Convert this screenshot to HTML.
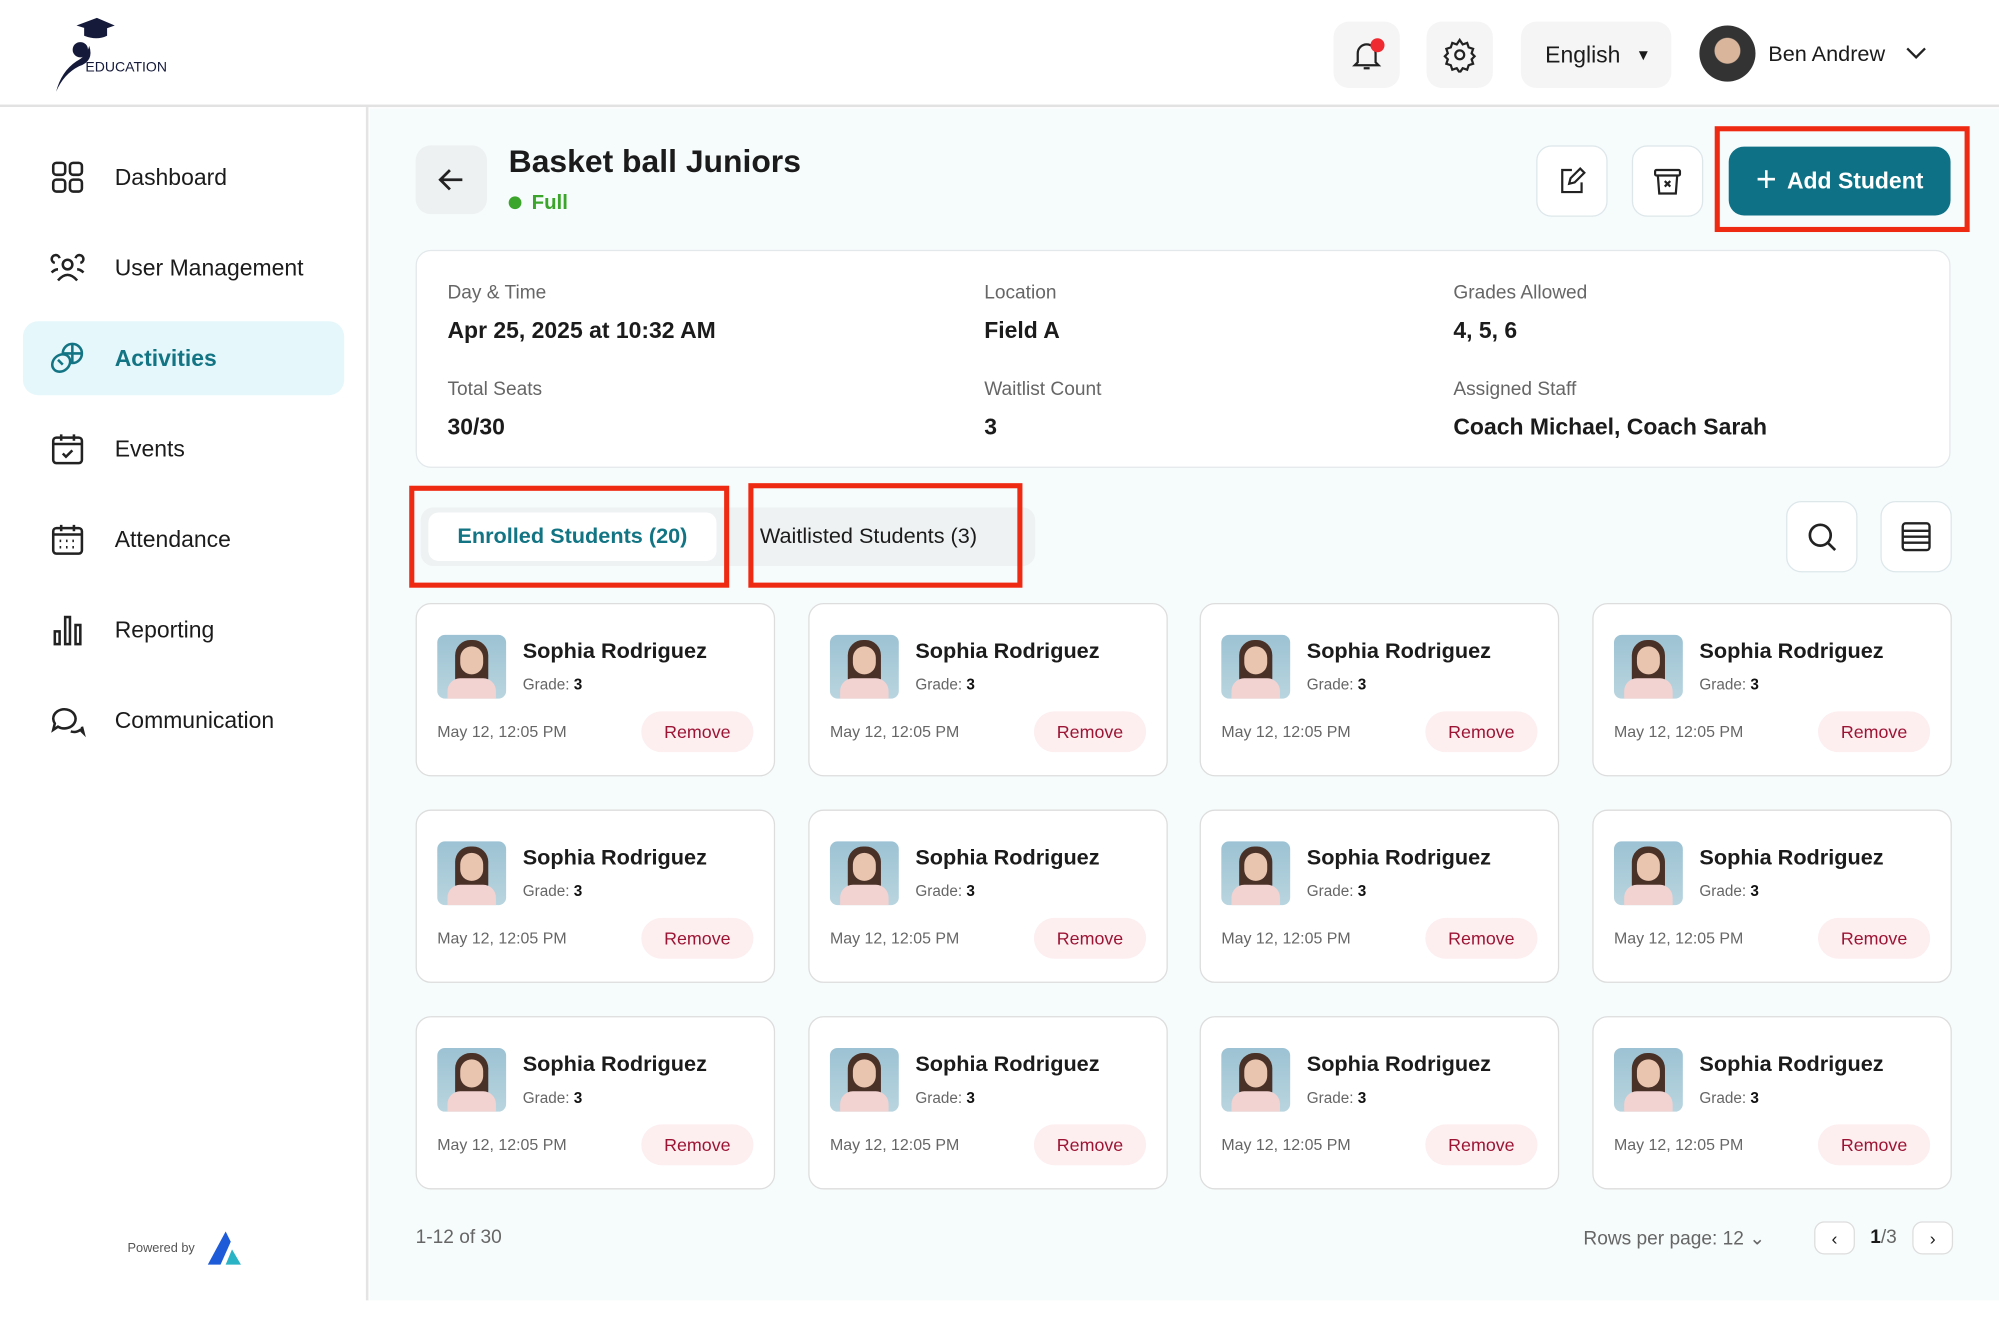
<!DOCTYPE html>
<html><head><meta charset="utf-8"><style>
*{box-sizing:border-box;margin:0;padding:0}
html,body{width:1999px;height:1326px;overflow:hidden;background:#fff;font-family:"Liberation Sans",sans-serif;color:#1b1b1b}
#w{width:1568px;height:1040px;transform:scale(1.27487);transform-origin:0 0;position:relative}
.a{position:absolute}
.hdr{left:0;top:0;width:1568px;height:84px;border-bottom:2px solid #e2e2e2;background:#fff}
.side{left:0;top:84px;width:289px;height:936px;border-right:2px solid #e4e4e4;background:#fff}
.main{left:290px;top:85px;width:1278px;height:935px;background:#f6fbfc}
.nav{left:18px;width:252px;height:58px;border-radius:12px;display:flex;align-items:center;padding-left:20px;font-size:18px;color:#1b1b1b}
.nav svg{width:30px;height:30px;margin-right:22px;fill:none;stroke:#222;stroke-width:1.6}
.nav.act{background:#e6f7fb;color:#137584;font-weight:bold}
.nav.act svg{stroke:#137584}
.ib{width:52px;height:52px;border-radius:12px;background:#f5f5f5;display:flex;align-items:center;justify-content:center}
.ib2{width:56px;height:56px;border-radius:12px;background:#fff;border:1px solid #dde7ea;display:flex;align-items:center;justify-content:center}
.lbl{font-size:15px;color:#666}
.val{font-size:18px;font-weight:bold;color:#1b1b1b}
.card{width:282px;height:136px;background:#fff;border:1.5px solid #ddd;border-radius:12px}
.ph{position:absolute;left:16px;top:24px;width:54px;height:50px;border-radius:6px;background:linear-gradient(#9cc2d3,#b9d5df);overflow:hidden}
.nm{position:absolute;left:83px;top:27px;font-size:17px;font-weight:bold}
.gr{position:absolute;left:83px;top:56px;font-size:12px;color:#666}
.gr b{color:#111}
.dt{position:absolute;left:16px;top:93px;font-size:12.5px;color:#666}
.rm{position:absolute;right:16px;top:84px;width:88px;height:32px;border-radius:16px;background:#fdeef0;color:#9c1434;font-size:14px;text-align:center;line-height:32px}
.red{border:4px solid #ef2a12}
</style></head><body><div id="w">
<div class="a hdr">
 <svg class="a" style="left:40px;top:12px" width="55" height="62" viewBox="0 0 55 62"><path d="M20 8 L36 2 L50 8 L36 13 Z" fill="#151a3a"/><path d="M26 10 v6 q10 4 18 0 v-6" fill="#151a3a"/><circle cx="23" cy="27" r="6" fill="#151a3a"/><path d="M30 24 Q34 36 22 40 Q10 46 4 60 Q8 44 20 36 Q28 32 30 24Z" fill="#151a3a"/></svg>
 <div class="a" style="left:67px;top:47px;font-size:11px;color:#151a3a">EDUCATION</div>
 <div class="a ib" style="left:1046px;top:17px"><svg width="28" height="28" viewBox="0 0 24 24" fill="none" stroke="#222" stroke-width="1.5"><path d="M6 17V11a6 6 0 0 1 12 0v6l2 2H4z"/><path d="M10 21h4"/></svg><div class="a" style="left:29px;top:13px;width:11px;height:11px;border-radius:50%;background:#ef2a30"></div></div>
 <div class="a ib" style="left:1119px;top:17px"><svg width="28" height="28" viewBox="0 0 24 24" fill="none" stroke="#222" stroke-width="1.5"><circle cx="12" cy="12" r="3"/><path d="M12 2l2 3 3-1 1 3 3 1-1 3 2 2-2 2 1 3-3 1-1 3-3-1-2 3-2-3-3 1-1-3-3-1 1-3-2-2 2-2-1-3 3-1 1-3 3 1z"/></svg></div>
 <div class="a ib" style="left:1193px;top:17px;width:118px;justify-content:flex-start;padding-left:19px;font-size:18px">English <span style="margin-left:12px;font-size:12px">▼</span></div>
 <div class="a" style="left:1333px;top:20px;width:44px;height:44px;border-radius:50%;background:radial-gradient(circle at 50% 45%,#d9b59c 0 30%,#333 32%)"></div>
 <div class="a" style="left:1387px;top:33px;font-size:17px">Ben Andrew</div>
 <svg class="a" style="left:1494px;top:35px" width="18" height="12" viewBox="0 0 18 12"><path d="M2 3l7 7 7-7" stroke="#222" stroke-width="1.8" fill="none"/></svg>
</div>
<div class="a side">
 <div class="a nav" style="top:26px"><svg viewBox="0 0 24 24"><rect x="3" y="3" width="7.5" height="7.5" rx="2"/><rect x="13.5" y="3" width="7.5" height="7.5" rx="2"/><rect x="3" y="13.5" width="7.5" height="7.5" rx="2"/><rect x="13.5" y="13.5" width="7.5" height="7.5" rx="2"/></svg>Dashboard</div>
 <div class="a nav" style="top:97px"><svg viewBox="0 0 24 24"><circle cx="12" cy="10" r="3"/><path d="M6 20q6-7 12 0M4 9a2.5 2.5 0 1 1 3-3M20 9a2.5 2.5 0 1 0-3-3M2 15q2-2 4-2M22 15q-2-2-4-2"/></svg>User Management</div>
 <div class="a nav act" style="top:168px"><svg viewBox="0 0 24 24"><circle cx="15" cy="9" r="6"/><path d="M15 3v12M9 9h12"/><ellipse cx="8" cy="15" rx="6" ry="5" transform="rotate(-40 8 15)" fill="#e6f7fb"/><path d="M6 13l3 3"/></svg>Activities</div>
 <div class="a nav" style="top:239px"><svg viewBox="0 0 24 24"><rect x="3" y="5" width="18" height="16" rx="2"/><path d="M3 9h18M8 3v4M16 3v4M9 15l2 2 4-4"/></svg>Events</div>
 <div class="a nav" style="top:310px"><svg viewBox="0 0 24 24"><rect x="3" y="5" width="18" height="16" rx="2"/><path d="M3 9h18M8 3v4M16 3v4M7 13h1M11 13h1M15 13h1M7 17h1M11 17h1M15 17h1"/></svg>Attendance</div>
 <div class="a nav" style="top:381px"><svg viewBox="0 0 24 24"><rect x="4" y="13" width="3" height="8"/><rect x="10.5" y="4" width="3" height="17"/><rect x="17" y="9" width="3" height="12"/></svg>Reporting</div>
 <div class="a nav" style="top:452px"><svg viewBox="0 0 24 24"><path d="M3 11a7 6 0 1 1 3 5l-3 2 1-4a6 6 0 0 1-1-3z"/><path d="M14 19a6 5 0 0 0 6-1l2 2-1-4"/></svg>Communication</div>
 <div class="a" style="left:100px;top:890px;font-size:10px;color:#555">Powered by</div>
 <svg class="a" style="left:161px;top:880px" width="30" height="30" viewBox="0 0 30 30"><path d="M2 28L16 2l4 8-8 18z" fill="#1d5bd8"/><path d="M16 28l5-12 7 12z" fill="#2ab3c4"/></svg>
</div>
<div class="a main"></div>
<div class="a ib2" style="left:326px;top:114px;width:56px;height:54px;background:#eef1f2;border:none"><svg width="26" height="26" viewBox="0 0 24 24" fill="none" stroke="#222" stroke-width="2"><path d="M20 12H4M11 5l-7 7 7 7"/></svg></div>
<div class="a" style="left:399px;top:113px;font-size:25px;font-weight:bold">Basket ball Juniors</div>
<div class="a" style="left:399px;top:151px;font-size:16px;font-weight:bold;color:#3aa52a"><span style="display:inline-block;width:10px;height:10px;border-radius:50%;background:#3aa52a;margin-right:8px"></span>Full</div>
<div class="a ib2" style="left:1205px;top:114px"><svg width="26" height="26" viewBox="0 0 24 24" fill="none" stroke="#222" stroke-width="1.6"><path d="M12 4H5v16h14v-7M10 14l1-4 7-7 3 3-7 7z"/></svg></div>
<div class="a ib2" style="left:1280px;top:114px"><svg width="26" height="26" viewBox="0 0 24 24" fill="none" stroke="#222" stroke-width="1.6"><rect x="3" y="4" width="18" height="4" rx="1"/><path d="M5 8l1 13h12l1-13M10 12l4 4M14 12l-4 4"/></svg></div>
<div class="a" style="left:1356px;top:115px;width:174px;height:54px;border-radius:12px;background:#0f7185;color:#fff;font-size:18px;font-weight:bold;display:flex;align-items:center;justify-content:center"><span style="font-size:28px;font-weight:normal;margin-right:8px;margin-top:-3px">+</span>Add Student</div>
<div class="a red" style="left:1345px;top:99px;width:200px;height:83px"></div>
<div class="a" style="left:326px;top:196px;width:1204px;height:171px;background:#fff;border:1px solid #e3e8ea;border-radius:12px">
 <div class="a lbl" style="left:24px;top:24px">Day &amp; Time</div><div class="a val" style="left:24px;top:52px">Apr 25, 2025 at 10:32 AM</div>
 <div class="a lbl" style="left:445px;top:24px">Location</div><div class="a val" style="left:445px;top:52px">Field A</div>
 <div class="a lbl" style="left:813px;top:24px">Grades Allowed</div><div class="a val" style="left:813px;top:52px">4, 5, 6</div>
 <div class="a lbl" style="left:24px;top:100px">Total Seats</div><div class="a val" style="left:24px;top:128px">30/30</div>
 <div class="a lbl" style="left:445px;top:100px">Waitlist Count</div><div class="a val" style="left:445px;top:128px">3</div>
 <div class="a lbl" style="left:813px;top:100px">Assigned Staff</div><div class="a val" style="left:813px;top:128px">Coach Michael, Coach Sarah</div>
</div>
<div class="a" style="left:330px;top:398px;width:482px;height:46px;background:#eef2f3;border-radius:10px"></div>
<div class="a" style="left:336px;top:402px;width:226px;height:38px;background:#fff;border-radius:8px;color:#137584;font-weight:bold;font-size:17px;text-align:center;line-height:38px">Enrolled Students (20)</div>
<div class="a" style="left:596px;top:411px;font-size:17px">Waitlisted Students (3)</div>
<div class="a red" style="left:321px;top:381px;width:251px;height:80px"></div>
<div class="a red" style="left:587px;top:379px;width:215px;height:82px"></div>
<div class="a ib2" style="left:1401px;top:393px"><svg width="28" height="28" viewBox="0 0 24 24" fill="none" stroke="#222" stroke-width="1.8"><circle cx="11" cy="11" r="7"/><path d="M16 16l5 5"/></svg></div>
<div class="a ib2" style="left:1475px;top:393px"><svg width="28" height="28" viewBox="0 0 24 24" fill="none" stroke="#222" stroke-width="1.6"><rect x="3" y="3" width="18" height="18" rx="2"/><path d="M3 8h18M3 12h18M3 16h18"/></svg></div>
<div id="cards"></div>
<div class="a" style="left:326px;top:962px;font-size:15px;color:#666">1-12 of 30</div>
<div class="a" style="left:1242px;top:962px;font-size:15px;color:#666">Rows per page: 12 ⌄</div>
<div class="a" style="left:1423px;top:958px;width:32px;height:26px;border:1px solid #ddd;border-radius:8px;background:#fff;text-align:center;line-height:24px;font-size:14px">‹</div>
<div class="a" style="left:1467px;top:962px;font-size:15px"><b>1</b><span style="color:#666">/3</span></div>
<div class="a" style="left:1500px;top:958px;width:32px;height:26px;border:1px solid #ddd;border-radius:8px;background:#fff;text-align:center;line-height:24px;font-size:14px">›</div>
<script>
var h='',xs=[326,634,941,1249],ys=[473,635,797];
ys.forEach(function(y){xs.forEach(function(x){h+='<div class="a card" style="left:'+x+'px;top:'+y+'px"><div class="ph"><div class="a" style="left:14px;top:4px;width:26px;height:36px;border-radius:12px 12px 6px 6px;background:#4a3128"></div><div class="a" style="left:18px;top:9px;width:18px;height:22px;border-radius:9px;background:#e9c4ae"></div><div class="a" style="left:8px;top:34px;width:38px;height:20px;border-radius:10px 10px 0 0;background:#f2d3d2"></div></div><div class="nm">Sophia Rodriguez</div><div class="gr">Grade: <b>3</b></div><div class="dt">May 12, 12:05 PM</div><div class="rm">Remove</div></div>';});});
document.getElementById('cards').innerHTML=h;
</script>
</div></body></html>
